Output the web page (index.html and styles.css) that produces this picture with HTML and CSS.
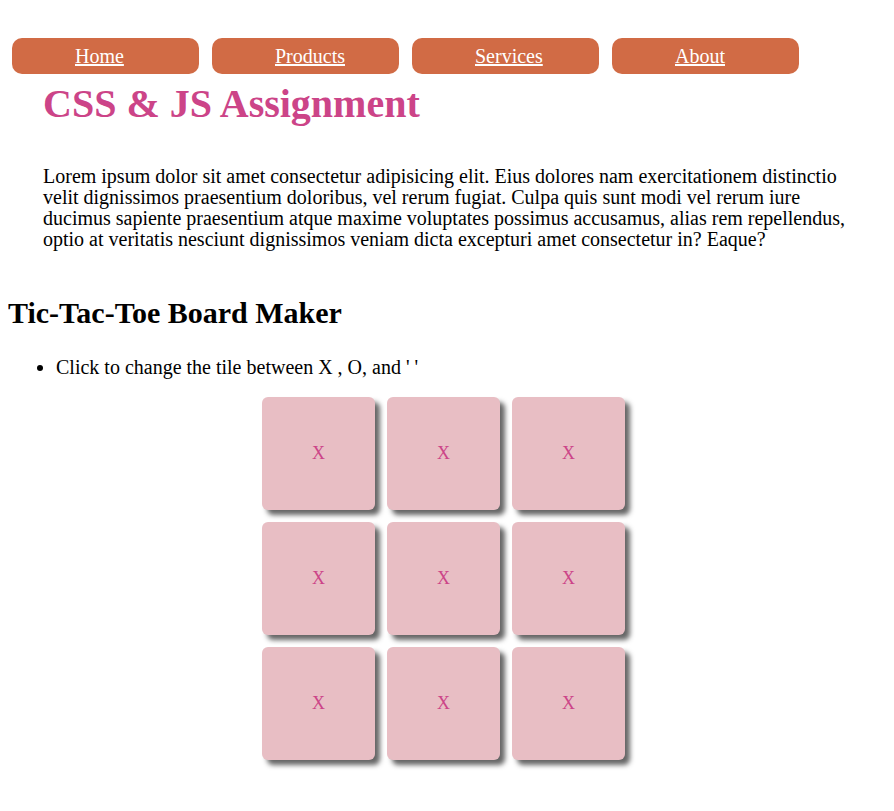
FILE: index.html
```html
<!DOCTYPE html>
<html lang="en">
<head>
<meta charset="utf-8">
<title>CSS &amp; JS Assignment</title>
<link rel="stylesheet" href="styles.css">
</head>
<body>
<nav class="nav">
  <a class="nav-btn" href="#">Home</a>
  <a class="nav-btn" href="#">Products</a>
  <a class="nav-btn" href="#">Services</a>
  <a class="nav-btn" href="#">About</a>
</nav>
<section class="intro">
  <h1 class="title">CSS &amp; JS Assignment</h1>
  <p class="lead">Lorem ipsum dolor sit amet consectetur adipisicing elit. Eius dolores nam exercitationem distinctio velit dignissimos praesentium doloribus, vel rerum fugiat. Culpa quis sunt modi vel rerum iure ducimus sapiente praesentium atque maxime voluptates possimus accusamus, alias rem repellendus, optio at veritatis nesciunt dignissimos veniam dicta excepturi amet consectetur in? Eaque?</p>
</section>
<h2 class="subtitle">Tic-Tac-Toe Board Maker</h2>
<ul class="notes">
  <li>Click to change the tile between X , O, and ' '</li>
</ul>
<div class="board-wrap">
  <div class="board">
    <div class="tile">X</div>
    <div class="tile">X</div>
    <div class="tile">X</div>
    <div class="tile">X</div>
    <div class="tile">X</div>
    <div class="tile">X</div>
    <div class="tile">X</div>
    <div class="tile">X</div>
    <div class="tile">X</div>
  </div>
</div>
</body>
</html>
```
FILE: styles.css
```css
body {
  margin: 8px;
  font-family: "Liberation Serif", "Times New Roman", serif;
  font-size: 20px;
  color: #000;
  background: #fff;
}

.nav {
  display: flex;
  gap: 13px;
  padding: 30px 4px 0;
}

.nav-btn {
  display: flex;
  align-items: center;
  width: 187px;
  height: 36px;
  padding-left: 63px;
  box-sizing: border-box;
  background: #d16b45;
  border-radius: 10px;
  color: #fff;
  font-size: 20px;
  text-decoration: underline;
}

.intro {
  padding: 0 30px 0 35px;
}

.title {
  margin: 6px 0 0;
  font-size: 40px;
  font-weight: bold;
  color: #cc4488;
}

.lead {
  margin: 39px 0 0;
  font-size: 20px;
  line-height: 21px;
}

.subtitle {
  margin: 46px 0 0;
  font-size: 30px;
  font-weight: bold;
}

.notes {
  margin: 26px 0 0;
  padding-left: 48px;
}

.board-wrap {
  display: flex;
  justify-content: center;
  padding-right: 7px;
  margin-top: 18px;
  padding-bottom: 20px;
}

.board {
  display: grid;
  grid-template-columns: repeat(3, 113px);
  grid-auto-rows: 113px;
  gap: 12px;
}

.tile {
  display: flex;
  align-items: center;
  justify-content: center;
  background: #e8bec4;
  border-radius: 6px;
  box-shadow: 5px 5px 5px #666;
  color: #cc4488;
  font-size: 18px;
}
```
